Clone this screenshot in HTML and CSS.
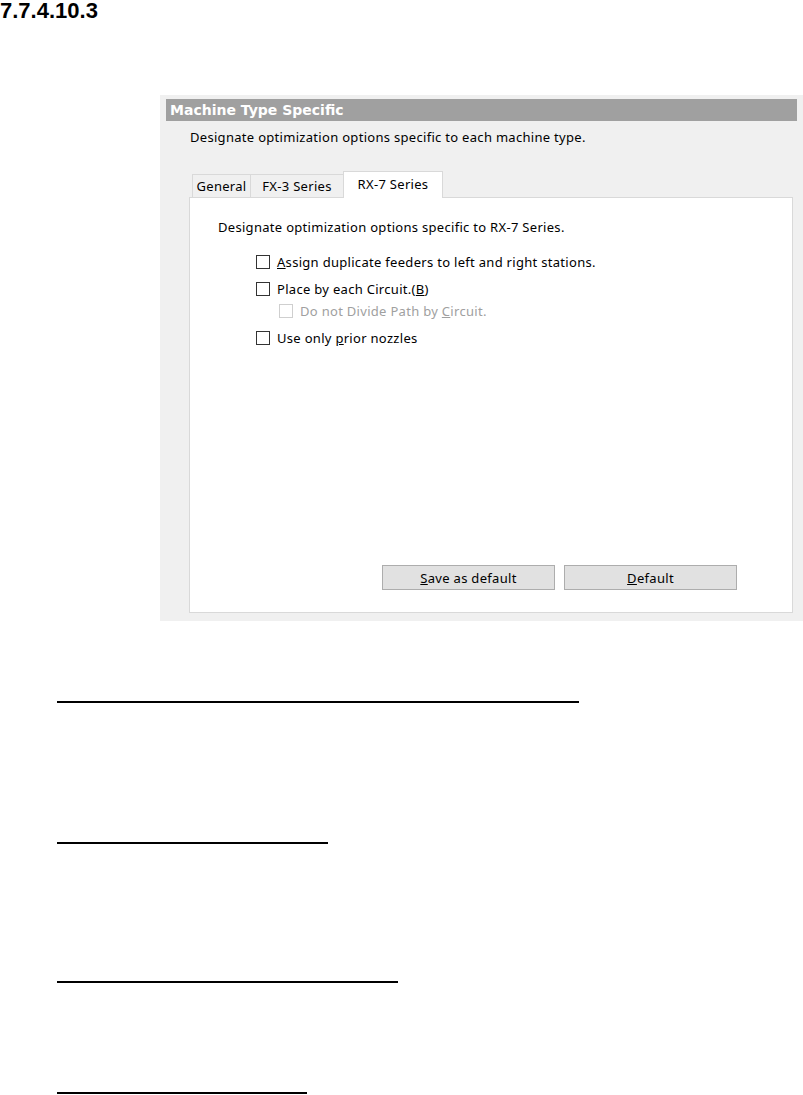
FILE: index.html
```html
<!DOCTYPE html>
<html lang="en">
<head>
    <meta charset="UTF-8">
    <title>7.7.4.10.3 Machine Type Specific</title>
    <link rel="stylesheet" href="styles.css">
</head>
<body>

    <h3 class="section-no">7.7.4.10.3</h3>

    <div class="dialog">
        <div class="dialog-title">Machine Type Specific</div>
        <p class="dialog-desc">Designate optimization options specific to each machine type.</p>

        <div class="tabs">
            <div class="tab">General</div>
            <div class="tab">FX-3 Series</div>
            <div class="tab active">RX-7 Series</div>
        </div>

        <div class="tab-page">
            <p class="page-desc">Designate optimization options specific to RX-7 Series.</p>

            <div class="options">
                <label class="option"><span class="box"></span><span><u>A</u>ssign duplicate feeders to left and right stations.</span></label>
                <label class="option"><span class="box"></span><span>Place by each Circuit.(<u>B</u>)</span></label>
                <label class="option sub disabled"><span class="box"></span><span>Do not Divide Path by <u>C</u>ircuit.</span></label>
                <label class="option"><span class="box"></span><span>Use only <u>p</u>rior nozzles</span></label>
            </div>

            <div class="buttons">
                <button type="button"><u>S</u>ave as default</button>
                <button type="button"><u>D</u>efault</button>
            </div>
        </div>
    </div>

    <div class="blanks">
        <div class="blank" style="width: 522px;"></div>
        <div class="blank" style="width: 271px;"></div>
        <div class="blank" style="width: 341px;"></div>
        <div class="blank" style="width: 250px;"></div>
    </div>

</body>
</html>
```

FILE: styles.css
```css
body {
    margin: 0;
    background-color: #fff;
    font-family: "Liberation Sans", Arial, sans-serif;
}
.section-no {
    margin: 0;
    font-size: 22px;
    line-height: 22px;
    font-weight: bold;
    color: #000;
}
.dialog {
    margin: 73px 0 0 160px;
    padding: 4px 6px 8px 6px;
    background-color: #f0f0f0;
    font-family: "Noto Sans", sans-serif;
    font-size: 13px;
    letter-spacing: 0.3px;
    color: #000;
}
.dialog-title {
    height: 22px;
    line-height: 22px;
    padding-left: 4px;
    background-color: #a0a0a0;
    color: #fff;
    font-family: "DejaVu Sans", sans-serif;
    font-weight: bold;
    font-size: 14px;
    letter-spacing: 0;
}
.dialog-desc {
    margin: 8px 0 0 24px;
    line-height: 16px;
}
.tabs {
    display: flex;
    align-items: flex-end;
    margin: 26px 0 0 26px;
    height: 26px;
}
.tab {
    height: 23px;
    line-height: 22px;
    text-align: center;
    background-color: #f0f0f0;
    border: 1px solid #d9d9d9;
    border-bottom: none;
    margin-right: -1px;
    box-sizing: border-box;
}
.tab:nth-child(1) {
    width: 59px;
}
.tab:nth-child(2) {
    width: 94px;
}
.tab.active {
    width: 100px;
    height: 27px;
    line-height: 25px;
    background-color: #fff;
    position: relative;
    top: 1px;
    z-index: 1;
}
.tab-page {
    margin: 0 4px 0 23px;
    height: 414px;
    background-color: #fff;
    border: 1px solid #d9d9d9;
    display: flex;
    flex-direction: column;
}
.page-desc {
    margin: 21px 0 0 28px;
    line-height: 16px;
}
.options {
    display: flex;
    flex-direction: column;
    gap: 5px;
    margin: 16px 0 0 66px;
}
.option {
    display: flex;
    align-items: center;
    gap: 7px;
    height: 22px;
}
.option.sub {
    margin-top: -5px;
    margin-left: 23px;
}
.box {
    width: 14px;
    height: 14px;
    border: 1px solid #333;
    background-color: #fff;
    box-sizing: border-box;
}
.option.disabled {
    color: #a0a0a0;
}
.option.disabled .box {
    border-color: #cfcfcf;
}
.buttons {
    margin-top: auto;
    margin-bottom: 22px;
    margin-left: 192px;
    display: flex;
    gap: 9px;
}
button {
    width: 173px;
    height: 25px;
    padding: 0;
    background-color: #e1e1e1;
    border: 1px solid #adadad;
    font-family: "Noto Sans", sans-serif;
    font-size: 13px;
    letter-spacing: 0.3px;
    color: #000;
}
.blanks {
    margin-top: 80px;
}
.blank {
    margin-left: 57px;
    height: 2px;
    background-color: #000;
}
.blank + .blank {
    margin-top: 139px;
}
.blank:nth-child(3) {
    margin-top: 137px;
}
.blank:last-child {
    margin-top: 109px;
}
```
